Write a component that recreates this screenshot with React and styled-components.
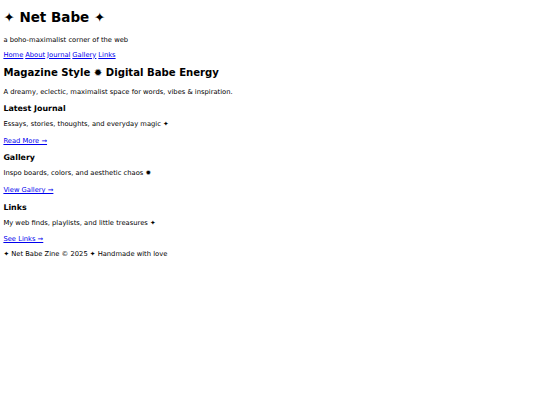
import styled, { createGlobalStyle } from 'styled-components';

const GlobalStyle = createGlobalStyle`
  body {
    margin: 0;
    background: #fff;
    color: #000;
    font-family: "DejaVu Sans", Verdana, sans-serif;
  }
`;

const Page = styled.div`
  padding: 3.4px 3.4px;
`;

const Header = styled.header`
  display: flex;
  flex-direction: column;
`;

const Title = styled.h1`
  margin: 6px 0 0;
  font-size: 13.5px;
  line-height: 16px;
  font-weight: bold;
`;

const Text = styled.p`
  margin: ${({ $top }) => $top ?? 6.75}px 0 0;
  font-size: 6.75px;
  line-height: 9px;
`;

const Nav = styled.nav`
  margin-top: 5.8px;
  font-size: 6.75px;
  line-height: 9px;
  display: flex;
  gap: 1.9px;
`;

const Link = styled.a`
  color: #0000ee;
  text-decoration: underline;
`;

const Headline = styled.h2`
  margin: 7.4px 0 0;
  font-size: 10.125px;
  line-height: 12px;
  font-weight: bold;
`;

const Section = styled.section`
  display: flex;
  flex-direction: column;
`;

const SectionTitle = styled.h3`
  margin: ${({ $top }) => $top}px 0 0;
  font-size: 7.9px;
  line-height: 10px;
  font-weight: bold;
`;

const Footer = styled.footer`
  margin-top: 5.2px;
  font-size: 6.75px;
  line-height: 9px;
`;

const sections = [
  { title: 'Latest Journal', text: 'Essays, stories, thoughts, and everyday magic ✦', link: 'Read More →', top: 7 },
  { title: 'Gallery', text: 'Inspo boards, colors, and aesthetic chaos ✹', link: 'View Gallery →', top: 7.5 },
  { title: 'Links', text: 'My web finds, playlists, and little treasures ✦', link: 'See Links →', top: 7.5 },
];

const App = () => {
  return (
    <Page>
      <GlobalStyle />
      <Header>
        <Title>✦ Net Babe ✦</Title>
        <Text $top={10.6}>a boho-maximalist corner of the web</Text>
        <Nav>
          <Link href="#">Home</Link>
          <Link href="#">About</Link>
          <Link href="#">Journal</Link>
          <Link href="#">Gallery</Link>
          <Link href="#">Links</Link>
        </Nav>
      </Header>
      <main>
        <Headline>Magazine Style ✹ Digital Babe Energy</Headline>
        <Text $top={8.6}>A dreamy, eclectic, maximalist space for words, vibes &amp; inspiration.</Text>
        {sections.map((s) => (
          <Section key={s.title}>
            <SectionTitle $top={s.top}>{s.title}</SectionTitle>
            <Text $top={6.3}>{s.text}</Text>
            <Text $top={7.6}>
              <Link href="#">{s.link}</Link>
            </Text>
          </Section>
        ))}
      </main>
      <Footer>✦ Net Babe Zine © 2025 ✦ Handmade with love</Footer>
    </Page>
  );
};

export default App;
